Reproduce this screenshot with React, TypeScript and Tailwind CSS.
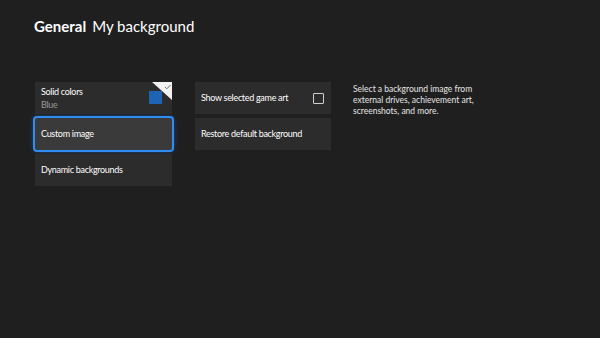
import React from 'react';

const font = { fontFamily: 'Lato, "Noto Sans", sans-serif' };

const App: React.FC = () => {
  return (
    <div className="w-[600px] h-[338px] bg-[#1f1f1f] text-white overflow-hidden" style={font}>
      {/* header */}
      <div className="pl-[34px] pt-[15px] flex items-baseline gap-[6px] text-[15px] leading-[22px]">
        <span className="font-bold">General</span>
        <span>My background</span>
      </div>

      <div className="flex pl-[35px] pt-[45px]">
        {/* left column */}
        <div className="w-[137px] flex flex-col gap-[4px] text-[9px] tracking-[-0.3px]">
          <div className="relative h-[32px] bg-[#2c2c2c] px-[6px] pt-[3px] overflow-hidden">
            <div className="leading-[13px]">Solid colors</div>
            <div className="leading-[13px] text-[#9a9a9a]">Blue</div>
            <div className="absolute left-[114px] top-[9px] w-[13px] h-[13px] bg-[#1e63b4]" />
            <svg className="absolute right-0 top-0" width="20" height="18" viewBox="0 0 20 18">
              <polygon points="0,0 20,0 20,18" fill="#f2f2f2" />
              <path d="M13 5 L14.8 6.8 L18.5 3" fill="none" stroke="#6a6a6a" strokeWidth="1" />
            </svg>
          </div>
          <div className="h-[32px] bg-[#3a3a3a] px-[6px] flex items-center rounded-[2px] outline-2 outline-[#2f8cf0] outline-offset-0 shadow-[0_0_6px_#1f6fd0]">
            Custom image
          </div>
          <div className="h-[32px] bg-[#2c2c2c] px-[6px] flex items-center">
            Dynamic backgrounds
          </div>
        </div>

        {/* middle column */}
        <div className="w-[136px] ml-[23px] flex flex-col gap-[4px] text-[9px] tracking-[-0.3px]">
          <div className="h-[32px] bg-[#2c2c2c] px-[6px] flex items-center justify-between">
            <span>Show selected game art</span>
            <span className="w-[11px] h-[11px] border border-[#d0d0d0] rounded-[1px] mr-[1px]" />
          </div>
          <div className="h-[32px] bg-[#2c2c2c] px-[6px] flex items-center">
            Restore default background
          </div>
        </div>

        {/* description */}
        <div className="ml-[22px] pt-[2px] w-[135px] text-[8.5px] leading-[11px] text-[#e6e6e6]">
          Select a background image from external drives, achievement art, screenshots, and more.
        </div>
      </div>
    </div>
  );
};

export default App;
